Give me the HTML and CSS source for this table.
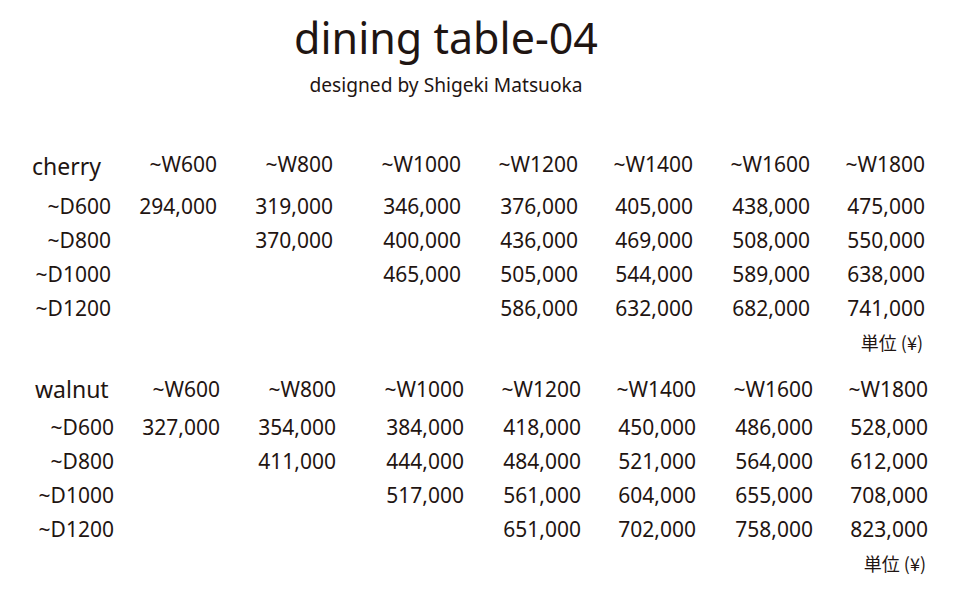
FILE: index.html
```html
<!DOCTYPE html>
<html lang="ja">
<head>
<meta charset="utf-8">
<title>dining table-04</title>
<link rel="stylesheet" href="styles.css">
</head>
<body>
<header class="masthead">
  <h1 class="title">dining table-04</h1>
  <p class="byline">designed by Shigeki Matsuoka</p>
</header>
<main class="tables">
  <section class="price-table price-table--cherry">
    <div class="cell cat">cherry</div>
    <div class="cell">~W600</div>
    <div class="cell">~W800</div>
    <div class="cell">~W1000</div>
    <div class="cell">~W1200</div>
    <div class="cell">~W1400</div>
    <div class="cell">~W1600</div>
    <div class="cell">~W1800</div>

    <div class="cell">~D600</div>
    <div class="cell">294,000</div>
    <div class="cell">319,000</div>
    <div class="cell">346,000</div>
    <div class="cell">376,000</div>
    <div class="cell">405,000</div>
    <div class="cell">438,000</div>
    <div class="cell">475,000</div>

    <div class="cell">~D800</div>
    <div class="cell"></div>
    <div class="cell">370,000</div>
    <div class="cell">400,000</div>
    <div class="cell">436,000</div>
    <div class="cell">469,000</div>
    <div class="cell">508,000</div>
    <div class="cell">550,000</div>

    <div class="cell">~D1000</div>
    <div class="cell"></div>
    <div class="cell"></div>
    <div class="cell">465,000</div>
    <div class="cell">505,000</div>
    <div class="cell">544,000</div>
    <div class="cell">589,000</div>
    <div class="cell">638,000</div>

    <div class="cell">~D1200</div>
    <div class="cell"></div>
    <div class="cell"></div>
    <div class="cell"></div>
    <div class="cell">586,000</div>
    <div class="cell">632,000</div>
    <div class="cell">682,000</div>
    <div class="cell">741,000</div>

    <div class="unit">単位 (¥)</div>
  </section>

  <section class="price-table price-table--walnut">
    <div class="cell cat">walnut</div>
    <div class="cell">~W600</div>
    <div class="cell">~W800</div>
    <div class="cell">~W1000</div>
    <div class="cell">~W1200</div>
    <div class="cell">~W1400</div>
    <div class="cell">~W1600</div>
    <div class="cell">~W1800</div>

    <div class="cell">~D600</div>
    <div class="cell">327,000</div>
    <div class="cell">354,000</div>
    <div class="cell">384,000</div>
    <div class="cell">418,000</div>
    <div class="cell">450,000</div>
    <div class="cell">486,000</div>
    <div class="cell">528,000</div>

    <div class="cell">~D800</div>
    <div class="cell"></div>
    <div class="cell">411,000</div>
    <div class="cell">444,000</div>
    <div class="cell">484,000</div>
    <div class="cell">521,000</div>
    <div class="cell">564,000</div>
    <div class="cell">612,000</div>

    <div class="cell">~D1000</div>
    <div class="cell"></div>
    <div class="cell"></div>
    <div class="cell">517,000</div>
    <div class="cell">561,000</div>
    <div class="cell">604,000</div>
    <div class="cell">655,000</div>
    <div class="cell">708,000</div>

    <div class="cell">~D1200</div>
    <div class="cell"></div>
    <div class="cell"></div>
    <div class="cell"></div>
    <div class="cell">651,000</div>
    <div class="cell">702,000</div>
    <div class="cell">758,000</div>
    <div class="cell">823,000</div>

    <div class="unit">単位 (¥)</div>
  </section>
</main>
</body>
</html>
```
FILE: styles.css
```css
html, body {
  margin: 0;
  padding: 0;
  background: #ffffff;
}

body {
  font-family: "Noto Sans", "Noto Sans CJK JP", sans-serif;
  color: #1f1512;
}

.masthead {
  display: flex;
  flex-direction: column;
  align-items: center;
  padding: 13px 68px 0 0;
}

.title {
  margin: 0;
  font-weight: 400;
  font-size: 43px;
  line-height: 50px;
}

.byline {
  margin: 9px 0 0;
  font-size: 19.2px;
  line-height: 26px;
}

.tables {
  display: flex;
  flex-direction: column;
  gap: 13px;
  padding-top: 49px;
}

.price-table {
  display: grid;
  grid-template-columns: 79px 106px 116px 128px 117px 115px 117px 115px;
  font-size: 21px;
  line-height: 34px;
}

.price-table--cherry {
  grid-template-rows: 42px repeat(5, 34px);
  padding-left: 32px;
}

.price-table--walnut {
  grid-template-rows: 38px repeat(5, 34px);
  padding-left: 35px;
}

.cell {
  text-align: right;
  white-space: nowrap;
}

.cat {
  text-align: left;
  font-size: 23px;
}

.price-table--cherry .cat {
  padding-top: 2px;
}

.unit {
  grid-column: 1 / -1;
  padding-right: 2px;
  text-align: right;
  font-family: "Noto Sans CJK JP", sans-serif;
  font-size: 18px;
  white-space: nowrap;
}
```
